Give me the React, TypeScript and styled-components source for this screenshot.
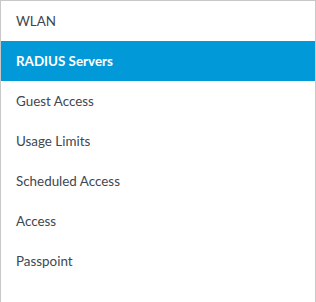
import styled, { createGlobalStyle } from 'styled-components';

const GlobalStyle = createGlobalStyle`
  html, body {
    margin: 0;
    padding: 0;
    background: #fff;
  }
`;

const Menu = styled.ul`
  list-style: none;
  margin: 0;
  padding: 0;
  width: 316px;
  height: 302px;
  box-sizing: border-box;
  border: 1px solid #c8c8c8;
  border-bottom: none;
  font-family: Lato, 'Open Sans', sans-serif;
  font-size: 13.4px;
`;

const Item = styled.li<{ $active?: boolean }>`
  display: flex;
  align-items: center;
  height: 40px;
  padding-left: 15px;
  color: ${({ $active }) => ($active ? '#fff' : '#3d4752')};
  background: ${({ $active }) => ($active ? '#0299d9' : 'transparent')};
  font-weight: ${({ $active }) => ($active ? 700 : 400)};
  cursor: pointer;
`;

const items = [
  'WLAN',
  'RADIUS Servers',
  'Guest Access',
  'Usage Limits',
  'Scheduled Access',
  'Access',
  'Passpoint',
];

export default function App() {
  return (
    <>
      <GlobalStyle />
      <Menu>
        {items.map((label) => (
          <Item key={label} $active={label === 'RADIUS Servers'}>
            {label}
          </Item>
        ))}
      </Menu>
    </>
  );
}
